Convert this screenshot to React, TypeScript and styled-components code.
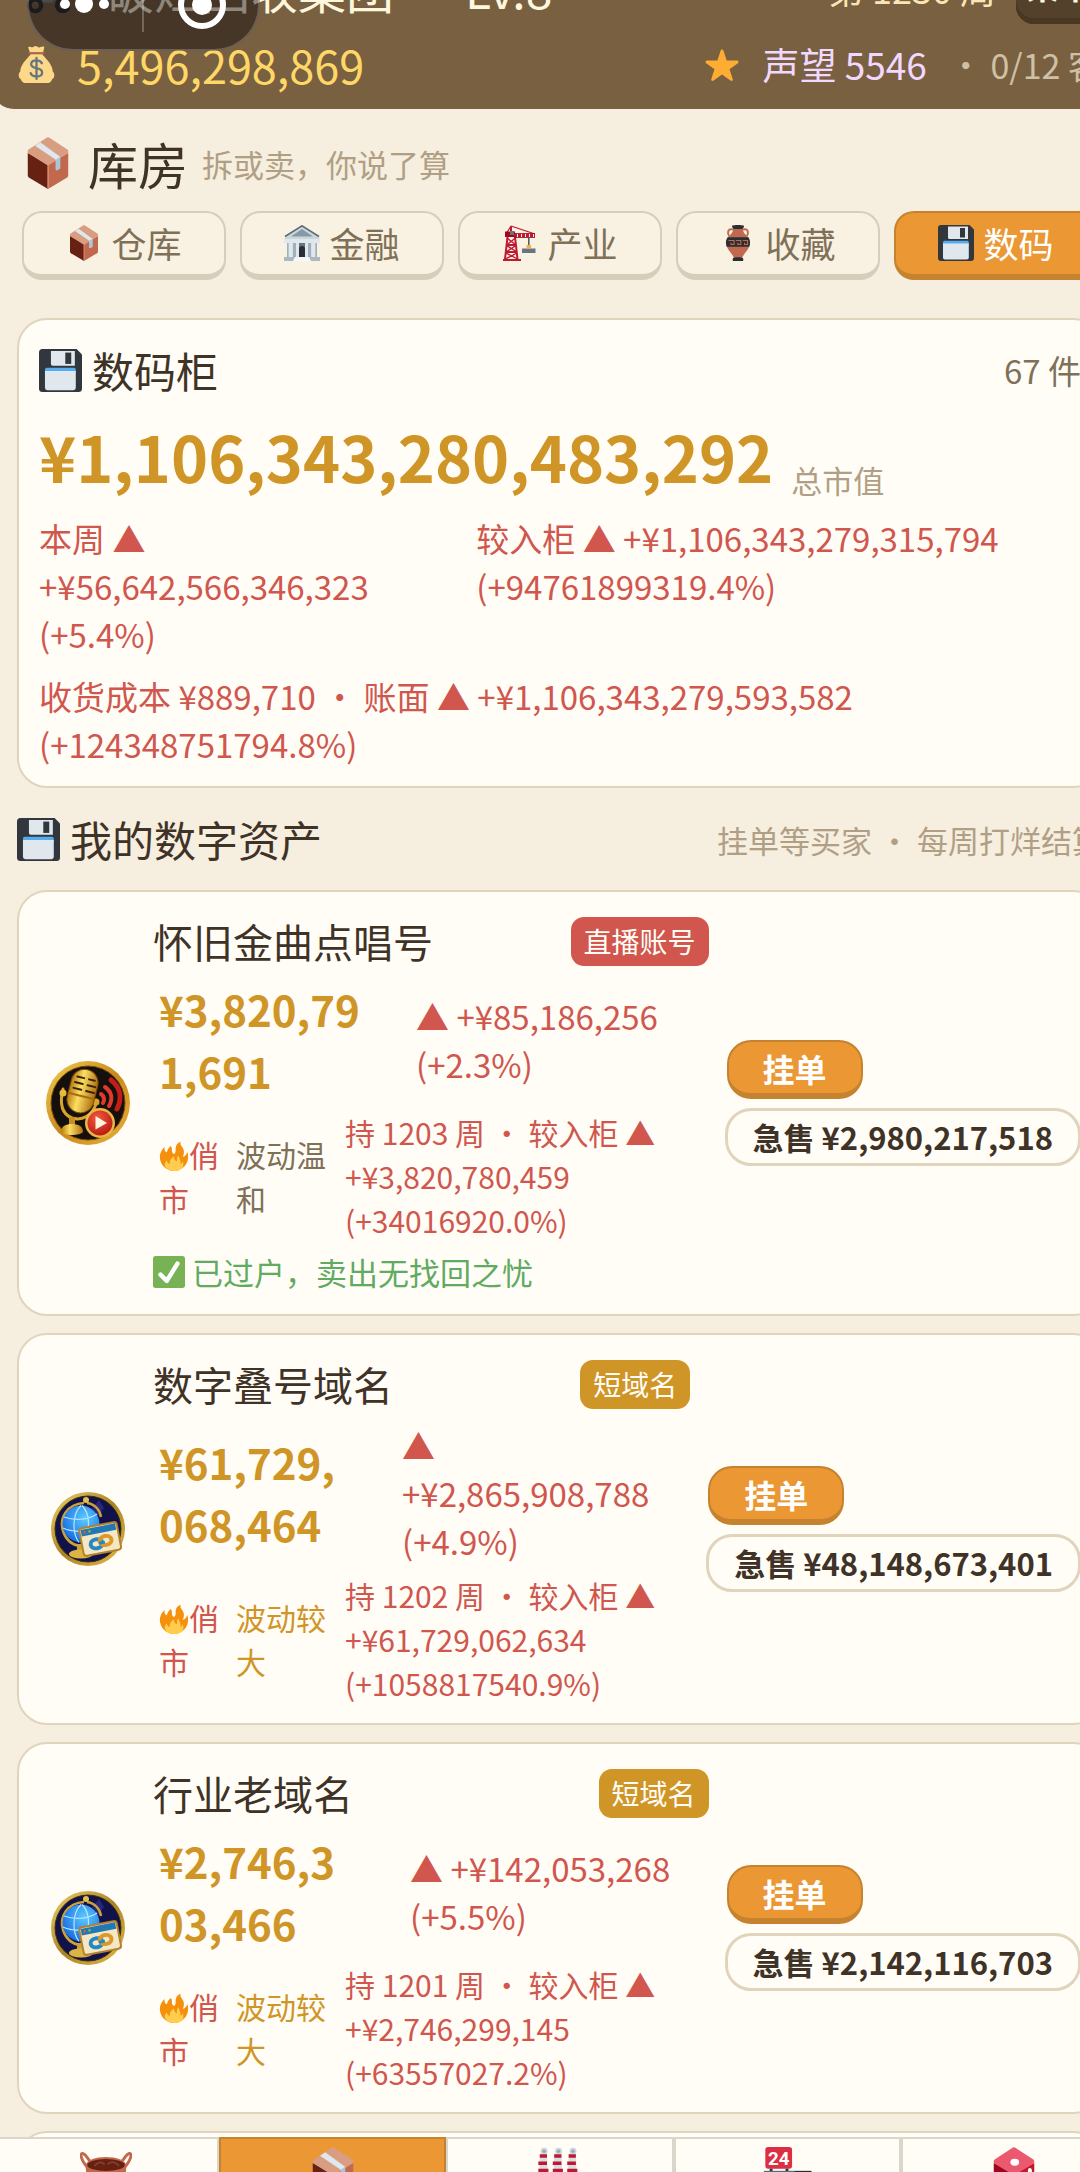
import { useState } from 'react';
import type { ReactNode } from 'react';
import styled, { createGlobalStyle, ThemeProvider } from 'styled-components';

const theme = {
  colors: {
    page: '#f6eedf',
    card: '#fffdf6',
    cardBorder: '#e0d4bd',
    header: '#796041',
    headerDark: '#54412b',
    orange: '#eb9733',
    orangeDark: '#c5832f',
    gold: '#cf9526',
    red: '#d0564e',
    green: '#5fab62',
    text: '#3f3226',
    muted: '#7f7058',
    faint: '#b09f84',
  },
};

type Color = keyof typeof theme.colors;

const GlobalStyle = createGlobalStyle`
  *, *::before, *::after {
    box-sizing: border-box;
  }

  body {
    margin: 0;
    background: ${theme.colors.page};
    font-family: 'Noto Sans CJK SC', 'Noto Sans', sans-serif;
    color: ${theme.colors.text};
  }

  h1, h2, h3, p {
    margin: 0;
    font-weight: 400;
  }

  button {
    font-family: inherit;
    cursor: pointer;
  }
`;

/* ---------- icons ---------- */

const Svg = styled.svg<{ $size: number }>`
  display: block;
  flex: none;
  width: ${({ $size }) => $size}px;
  height: ${({ $size }) => $size}px;
`;

type IconProps = { size: number };

const BoxIcon = ({ size }: IconProps) => (
  <Svg $size={size} viewBox="0 0 36 36" aria-hidden="true">
    <path fill="#662113" d="M4 11v15.500c0 .8.4 1.300 1 1.700L18 36V18.500z" />
    <path fill="#c1694f" d="M32 11v15.500c0 .8-.4 1.300-1 1.700L18 36V18.500z" />
    <path fill="#d99e82" d="M17 .6 4.600 8.600c-.6.4-.8 1.200-.6 2.400l13 8.200c.7.4 1.300.4 2 0l13-8.200c.2-1.200 0-2-.6-2.400L19 .6c-.7-.5-1.300-.5-2 0z" />
    <path fill="#dfe8ee" d="M9 6 23.400 15.800v6.400c0 .9.7 1 1.300.6l1.700-1.100v-8L12.600 3.700z" />
    <path fill="#a9c5d8" d="M23.400 15.800v6.400c0 .9.7 1 1.300.6l1.700-1.100v-8z" />
    <path fill="none" stroke="#ea9b7c" strokeWidth=".8" d="M18 19v16.600" />
  </Svg>
);

const FloppyIcon = ({ size }: IconProps) => (
  <Svg $size={size} viewBox="0 0 36 36" aria-hidden="true">
    <path fill="#31373d" d="M3 0h28.500L36 4.500V33a3 3 0 0 1-3 3H3a3 3 0 0 1-3-3V3a3 3 0 0 1 3-3z" />
    <path fill="#e1e8ed" d="M10 1.600h20V14H11.500A1.500 1.500 0 0 1 10 12.500z" />
    <path fill="#31373d" d="M22 3h5v9.500h-5z" />
    <path fill="#55acee" d="M6.500 15.700h22.800a1.500 1.500 0 0 1 1.500 1.500V20H5v-2.800a1.500 1.500 0 0 1 1.500-1.500z" />
    <path fill="#e1e8ed" d="M5 18.500h25.800v14a2 2 0 0 1-2 2H7a2 2 0 0 1-2-2z" />
  </Svg>
);

const BankIcon = ({ size }: IconProps) => (
  <Svg $size={size} viewBox="0 0 36 36" aria-hidden="true">
    <path fill="#ccd6dd" d="M3 13h30v19H3z" />
    <path fill="#9fb1bd" d="M9 18h3v14H9zM24 18h3v14h-3zM3 18h1.500v14H3zM31.500 18H33v14h-1.500z" />
    <path fill="#66757f" d="M13 18h10v15H13z" />
    <path fill="#292f33" d="M15 24a3 3 0 0 1 6 0v9h-6z" />
    <path fill="#e1e8ed" d="M5 18h3.500v14H5zM12 18h3v14h-3zM21 18h3v14h-3zM27.500 18H31v14h-3.500zM0 13.500h36V18H0z" />
    <path fill="#ccd6dd" d="M18 0 1 11.500V14h34v-2.500z" />
    <path fill="#8899a6" d="M18 4 7 11.500h22z" />
    <path fill="none" stroke="#5c6b75" strokeWidth="1.500" d="M1 11.500 18 .8l17 10.700" />
    <path fill="#aab8c2" d="M0 32h11l-1 4H0zM25 32h11v4H26z" />
    <path fill="#f5f8fa" d="M11 32h14l2 4H9z" />
  </Svg>
);

const CraneIcon = ({ size }: IconProps) => (
  <Svg $size={size} viewBox="0 0 36 36" aria-hidden="true">
    <path fill="none" stroke="#be1931" strokeWidth="2" d="M5.500 12 3 34M13 12l2.500 22M1 35h18M4.500 20h9M4 27h11M9 1.500v8" />
    <path fill="none" stroke="#be1931" strokeWidth="1.400" d="m5 13 9 7M13.500 13 4.500 20M4.500 20.500l10.500 6.500M14 20.500 4 27M4 28l11.500 6M15 28 3.500 34" />
    <path fill="none" stroke="#be1931" strokeWidth="1.200" d="m9 1 24 8M9 1 4 9" />
    <path fill="#a0041e" d="M3 6.500h10V12H3z" />
    <path fill="#66757f" d="M8 6h4v4H8z" />
    <path fill="none" stroke="#be1931" strokeWidth="3.500" strokeDasharray="3 1" d="M12 10.500h21" />
    <path fill="none" stroke="#a0041e" strokeWidth=".8" d="M12 8.500h21M12 12.500h21" />
    <path fill="#4c6272" d="M26 13h1.600v7H26z" />
    <path fill="#ffac33" d="M24.500 20h4.600v3h-4.600z" />
    <path fill="#66757f" d="M20 23.500h13.500V28H20z" />
  </Svg>
);

const AmphoraIcon = ({ size }: IconProps) => (
  <Svg $size={size} viewBox="0 0 36 36" aria-hidden="true">
    <path fill="none" stroke="#c1694f" strokeWidth="2" d="M13 4.500c-5-1.500-6 3-4 6.500M23 4.500c5-1.500 6 3 4 6.500" />
    <path fill="#c1694f" d="M13 3h10c-.5 4 1.500 5.500 4 8 3 3 3.500 8 1.500 12-1.800 3.700-5 6-6.500 10h-8c-1.500-4-4.700-6.300-6.500-10C5.500 19 6 14 9 11c2.500-2.500 4.500-4 4-8z" />
    <path fill="#292f33" d="M12 1c0-1.300 12-1.300 12 0 0 1.200-1 2.700-2 3h-8c-1-.3-2-1.800-2-3zM13 33.200c1-1.300 9-1.300 10 0 .6 1.500.4 2.800-.6 2.800h-8.800c-1 0-1.200-1.300-.6-2.800zM7.700 12.300h20.600c2 2.700 2.200 6.200 1 9.400H6.700c-1.200-3.200-1-6.700 1-9.400z" />
    <path fill="none" stroke="#c1694f" strokeWidth="1.100" d="M8.500 15.500H14v4h-3v-1.800M15.800 15.500h5v4h-3v-1.800M22.800 15.500h4.800v4h-3v-1.800" />
  </Svg>
);

const MoneyBagIcon = ({ size }: IconProps) => (
  <Svg $size={size} viewBox="0 0 36 36" aria-hidden="true">
    <path fill="#fdd888" d="M12.500 8C7 14 2 19.500 2.300 24.500c-2.700 3-1.800 6.500.7 8C3.600 35 5.500 36 8 36h20c2.500 0 4.400-1 5-3.500 2.500-1.500 3.400-5 .7-8C34 19.500 29 14 23.500 8z" />
    <path fill="#fdd888" d="M11.500 6 10 1.800C9.700.8 11 .3 12.500 1c1 .4 1.700.3 2.700-.3C16.500-.1 18-.1 18.900.7c1 .8 2 .8 3 .3 2-1 4-.8 3.600.6L24.500 6z" />
    <path fill="none" stroke="#bf6952" strokeWidth="1.600" strokeLinecap="round" d="M11 6.800h14" />
    <path fill="none" stroke="#67757f" strokeWidth="2.200" strokeLinecap="round" d="M23.200 16.800c-.8-2-2.800-2.800-5.200-2.800-3 0-5.200 1.200-5.200 3.700 0 5.300 10.700 2.500 10.700 8 0 2.600-2.300 3.900-5.500 3.900-2.800 0-5-1-5.700-3.200M18 11.500v20.500" />
  </Svg>
);

const StarIcon = ({ size }: IconProps) => (
  <Svg $size={size} viewBox="0 0 36 36" aria-hidden="true">
    <path
      fill="#ffac33"
      d="M27.300 34.900c-.3 0-.6-.1-.9-.3L18 28.500l-8.400 6.100c-.3.200-.6.300-.9.300-1.100 0-1.700-1-1.400-2l3.200-9.700-8.300-6c-1.200-.8-.7-2.800.9-2.800h10.300l3.200-9.700c.3-1 1.200-1.200 1.400-1.200.3 0 1.200.2 1.500 1.200l3.200 9.700H33c1.600 0 2.100 2 .9 2.800l-8.400 6 3.200 9.700c.3 1-.3 2-1.400 2z"
    />
  </Svg>
);

const FireIcon = ({ size }: IconProps) => (
  <Svg $size={size} viewBox="0 0 36 36" aria-hidden="true">
    <path fill="#f4900c" d="M35 19c0-2.100-.4-4.100-1-5.900-1.300 3.500-3.300 5.600-5.500 5.900 1.600-2.700 1.800-6.200.8-9-.9-2.500-2.500-3.800-3.300-5.500-.5-1.200-.3-2.500.2-3.500-4.200 1-6.500 5-6.200 9.500.1 2-.2 4.200-2 5-1.700-.7-2.700-2.500-2.500-4.500.2-1.800-.2-3.600-1.300-5-2.500 2-4.200 4.300-4.700 7.500C7 13 6 10 7 7.100 3.600 9.500 1 14 1 19c0 9.400 7.600 17 17 17s17-7.600 17-17z" />
    <path fill="#ffcc4d" d="M28.400 23.700c.1 2-1 3.300-2.500 3.700.5-3.700-1.600-6.200-2.600-10.300-1.700 1.600-2.100 4.500-1.600 7.100-2.400-.5-3.800-3-3.700-6-3.500 2-5.500 5-5.200 9.300-1.700-.3-3.100-1.700-3.300-4.300-1.700 1.500-2.700 3.600-2.700 5.700C7.800 33.200 12.400 36 18 36s11.200-2.300 11.200-7.300c0-2-.2-3.800-.8-5z" />
  </Svg>
);

const CheckIcon = ({ size }: IconProps) => (
  <Svg $size={size} viewBox="0 0 36 36" aria-hidden="true">
    <rect width="36" height="36" rx="3" fill="#77b255" />
    <path fill="none" stroke="#fff" strokeWidth="5" strokeLinecap="round" strokeLinejoin="round" d="m8.500 21 7 7L27.500 8.500" />
  </Svg>
);

const PotIcon = ({ size }: IconProps) => (
  <Svg $size={size} viewBox="0 0 36 36" aria-hidden="true">
    <path fill="none" stroke="#c1694f" strokeWidth="2" d="M5 14C0 8 0 4 2 4.500c2.500.5 3 4 5 5M31 14c5-6 5-10 3-9.500-2.500.5-3 4-5 5" />
    <path fill="#c1694f" d="M4 13c0-8 28-8 28 0 0 8-2 21-14 21S4 21 4 13z" />
    <ellipse cx="18" cy="12.500" rx="13" ry="4.200" fill="#662113" />
    <path fill="none" stroke="#8a3d2b" strokeWidth="1.200" d="M10 13c3-3 5-3 7-1M19 12c2-2 5-2 8 1" />
  </Svg>
);

const FactoryIcon = ({ size }: IconProps) => (
  <Svg $size={size} viewBox="0 0 36 36" aria-hidden="true">
    {[3, 13, 23].map((x) => (
      <g key={x}>
        <circle cx={x + 4} cy="3" r="2.400" fill="#ccd6dd" />
        <circle cx={x + 4} cy="3" r="1.200" fill="#99aab5" />
        <path fill="#d8dfe3" d={`M${x + 1} 5h5l1 27h-7z`} />
        <path fill="#be1931" d={`M${x + 1} 5h5v2.500h-5zM${x} 10h6v2.500h-6zM${x} 15h7v2.500h-7z`} />
      </g>
    ))}
  </Svg>
);

const StoreIcon = ({ size }: IconProps) => (
  <Svg $size={size} viewBox="0 0 36 36" aria-hidden="true">
    <rect x="3" width="18.500" height="15" rx="2" fill="#dd2e44" />
    <text x="12.250" y="12.300" fill="#fff" fontSize="13" fontWeight="700" textAnchor="middle" fontFamily="Roboto, sans-serif">24</text>
    <path fill="#292f33" d="M6 15h2v2H6zM17 15h2v2h-2z" />
    <path fill="#4c6f80" d="M2 16.500h21v18H2z" />
    <path fill="#292f33" d="M23 16.500h12v18H23z" />
  </Svg>
);

const DiceIcon = ({ size }: IconProps) => (
  <Svg $size={size} viewBox="0 0 36 36" aria-hidden="true">
    <path fill="#a0041e" d="M4 11v15.500c0 .8.4 1.300 1 1.700L18 36V18.500z" />
    <path fill="#be1931" d="M32 11v15.500c0 .8-.4 1.300-1 1.700L18 36V18.500z" />
    <path fill="#ea596e" d="M17 .6 4.600 8.600c-.6.4-.8 1.200-.6 2.400l13 8.200c.7.4 1.300.4 2 0l13-8.200c.2-1.200 0-2-.6-2.400L19 .6c-.7-.5-1.300-.5-2 0z" />
    <ellipse cx="18.500" cy="10.500" rx="3" ry="2.400" fill="#fff" />
    <ellipse cx="29" cy="16.500" rx="1.400" ry="2" fill="#fff" />
  </Svg>
);

const ScooterIcon = ({ size }: IconProps) => (
  <Svg $size={size} viewBox="0 0 36 36" aria-hidden="true">
    <path fill="#7b8a92" d="M5 26c0-6 5-9 10-8l5 6 5-14h5l-6 18H10z" />
    <circle cx="12" cy="30" r="4" fill="none" stroke="#292f33" strokeWidth="3" />
    <circle cx="31" cy="30" r="4" fill="none" stroke="#292f33" strokeWidth="3" />
  </Svg>
);

const MicMedal = () => (
  <Svg $size={84} viewBox="0 0 84 84" role="img" aria-label="直播账号">
    <defs>
      <linearGradient id="micRing" x1="0" y1="0" x2="1" y2="1">
        <stop offset="0" stopColor="#f3cf55" />
        <stop offset=".5" stopColor="#c8891c" />
        <stop offset="1" stopColor="#e9b23a" />
      </linearGradient>
      <linearGradient id="micGold" x1="0" y1="0" x2="1" y2="0">
        <stop offset="0" stopColor="#b87a13" />
        <stop offset=".4" stopColor="#fbdf62" />
        <stop offset="1" stopColor="#b06f10" />
      </linearGradient>
      <radialGradient id="playRed" cx=".4" cy=".3" r=".8">
        <stop offset="0" stopColor="#f2593d" />
        <stop offset="1" stopColor="#b3140f" />
      </radialGradient>
    </defs>
    <circle cx="42" cy="42" r="42" fill="url(#micRing)" />
    <circle cx="42" cy="42" r="37" fill="#16100c" stroke="#7d4b0d" />
    <path fill="none" stroke="#c31d1a" strokeWidth="5" strokeLinecap="round" d="M65 19c10 8 11 19 6 29" />
    <path fill="none" stroke="#e13a2c" strokeWidth="4" strokeLinecap="round" d="M59 26c7 5 8 12 4 19M55 33c3 2 4 6 2 9" />
    <path fill="none" stroke="#d9a42c" strokeWidth="3" strokeLinecap="round" d="M17 28c-4 16-1 25 9 29 10 3 20-2 24-14" />
    <circle cx="17" cy="32" r="3.500" fill="#e7b93c" />
    <circle cx="50" cy="41" r="3.500" fill="#d9a42c" />
    <path fill="#c88f20" d="M23 56h6v9h-6z" />
    <path fill="url(#micGold)" d="M15 71c0-6 5-8 11-8s11 2 11 8c-3 4-19 4-22 0z" />
    <g transform="rotate(14 36 30)">
      <rect x="23" y="8" width="27" height="44" rx="13.500" fill="url(#micGold)" stroke="#7a4a08" />
      <path stroke="#3a2205" strokeWidth="2" strokeLinecap="round" d="M28 17h7M40 17h6M27 23h8M40 23h8M27 29h8M40 29h8" />
      <path stroke="#a86b10" strokeWidth="2" d="M23 35h27" />
    </g>
    <circle cx="54" cy="62" r="15" fill="#e9b84a" />
    <circle cx="54" cy="62" r="12.500" fill="url(#playRed)" />
    <path fill="#fff4e0" d="M49.500 55v13.500L61 62z" />
  </Svg>
);

const GlobeMedal = () => (
  <Svg $size={74} viewBox="0 0 74 74" role="img" aria-label="短域名">
    <defs>
      <linearGradient id="globeRing" x1="0" y1="0" x2="1" y2="1">
        <stop offset="0" stopColor="#ecd46c" />
        <stop offset=".5" stopColor="#a98324" />
        <stop offset="1" stopColor="#e3bc4a" />
      </linearGradient>
      <radialGradient id="globeBlue" cx=".6" cy=".35" r=".7">
        <stop offset="0" stopColor="#5ccbff" />
        <stop offset="1" stopColor="#1668e0" />
      </radialGradient>
    </defs>
    <circle cx="37" cy="37" r="37" fill="url(#globeRing)" />
    <circle cx="37" cy="37" r="33" fill="#11124a" stroke="#3d2b0c" />
    <path fill="#2a2679" d="m48 8 5 8-6 8-6-8z" />
    <path fill="none" stroke="#caa23a" strokeWidth="2.500" d="M33 11C16 12 8 26 12 39c3 9 9 14 17 15M36 11c8 1 13 7 14 14" />
    <circle cx="35" cy="8" r="3" fill="#e2bf52" />
    <path fill="#caa23a" d="M26 52h7v7h-7z" />
    <ellipse cx="30" cy="62" rx="12" ry="4.500" fill="#dcb345" />
    <circle cx="30" cy="32" r="18.500" fill="url(#globeBlue)" />
    <path fill="none" stroke="#b9e6ff" strokeWidth="1.200" d="M30 13.500c-9 9-9 28-2 37M31 13.500c9 9 8 26 1 37M13 25c11 4 24 3 33-3M12 36c11 5 26 4 36-2" />
    <g transform="rotate(-11 49 46)">
      <rect x="30" y="33" width="38" height="28" rx="3" fill="#f6e7c4" stroke="#b3822c" strokeWidth="2" />
      <path fill="#2277b5" d="M31.500 34.500h35V41h-35z" />
      <circle cx="35" cy="37.500" r="1.400" fill="#e3552b" />
      <circle cx="40" cy="37.500" r="1.400" fill="#6fbd4a" />
      <ellipse cx="44.500" cy="51" rx="6" ry="4.500" fill="none" stroke="#2388c4" strokeWidth="4" />
      <ellipse cx="54" cy="49.500" rx="6" ry="4.500" fill="none" stroke="#d99a2b" strokeWidth="4" />
      <path stroke="#2388c4" strokeWidth="3" d="M47 51h6" />
    </g>
  </Svg>
);

/* ---------- layout ---------- */

const Shell = styled.div`
  position: relative;
  display: flex;
  flex-direction: column;
  height: 100vh;
  overflow: hidden;
`;

/* the game board is a little wider than the web view that hosts it */
const Page = styled.div`
  flex: 1;
  min-height: 0;
  width: calc(100% + 40px);
  margin-top: -48px;
  overflow: hidden;
`;

const Header = styled.header`
  display: flex;
  flex-direction: column;
  gap: 10px;
  margin: 0 -8px;
  padding: 0 26px 15px;
  border-radius: 0 0 22px 22px;
  background: ${({ theme }) => theme.colors.header};
  white-space: nowrap;
`;

const HeaderRow = styled.div<{ $height: number }>`
  display: flex;
  align-items: center;
  justify-content: space-between;
  height: ${({ $height }) => $height}px;
`;

const HeaderGroup = styled.div<{ $gap: number }>`
  display: flex;
  align-items: center;
  gap: ${({ $gap }) => $gap}px;
`;

const Company = styled.h1`
  font-size: 48px;
  color: #fff6de;
`;

const Level = styled.span`
  margin-left: 35px;
  font-size: 48px;
  color: #fff6de;
`;

const Week = styled.span`
  font-size: 36px;
  color: #fce5b5;
`;

const MenuButton = styled.button`
  height: 72px;
  padding: 0 10px 6px;
  border: 0;
  border-radius: 18px;
  background: ${({ theme }) => theme.colors.headerDark};
  box-shadow: inset 0 -6px 0 #493722;
  font-size: 33px;
  font-weight: 700;
  color: #fff6de;
`;

const Money = styled.span`
  font-size: 45px;
  color: #ffd766;
`;

const Fame = styled.span`
  font-size: 37px;
  color: #f0d8ff;
`;

const Seats = styled.span`
  font-size: 34px;
  color: #cfc0a6;
`;

const Capsule = styled.div`
  position: absolute;
  top: -42px;
  left: 27px;
  width: 233px;
  height: 93px;
  border: 2px solid rgba(255, 255, 255, 0.2);
  border-radius: 46px;
  background: rgba(10, 5, 8, 0.46);
`;

const Main = styled.main`
  padding: 24px 17px 0;
`;

const TitleRow = styled.div`
  display: flex;
  align-items: center;
  gap: 14px;
  height: 60px;
  padding-left: 5px;
`;

const PageTitle = styled.h2`
  font-size: 50px;
  line-height: 60px;
`;

const Hint = styled.span`
  font-size: 31px;
  color: ${({ theme }) => theme.colors.faint};
  white-space: nowrap;
`;

const Tabs = styled.div`
  display: grid;
  grid-template-columns: repeat(5, 1fr);
  gap: 14px;
  margin: 18px 5px 38px;
`;

const Tab = styled.button<{ $active: boolean }>`
  display: flex;
  align-items: center;
  justify-content: center;
  gap: 9px;
  height: 69px;
  padding: 0 0 2px;
  border: 2px solid ${({ $active, theme }) => ($active ? theme.colors.orangeDark : '#d6cdbb')};
  border-bottom-width: 6px;
  border-radius: 20px;
  background: ${({ $active, theme }) => ($active ? theme.colors.orange : '#f9f1e1')};
  font-size: 35px;
  line-height: 48px;
  color: ${({ $active, theme }) => ($active ? '#ffffff' : theme.colors.muted)};
`;

const Card = styled.section`
  padding: 18px 20px;
  border: 2px solid ${({ theme }) => theme.colors.cardBorder};
  border-radius: 30px;
  background: ${({ theme }) => theme.colors.card};
`;

const CardHead = styled.div`
  display: flex;
  align-items: center;
  justify-content: space-between;
  height: 64px;
`;

const SectionHead = styled(CardHead)`
  height: 70px;
  margin: 16px 0;
`;

const Heading = styled.h3`
  display: flex;
  align-items: center;
  gap: 10px;
  font-size: 42px;
  line-height: 60px;
`;

const Count = styled.span`
  font-size: 33px;
  color: ${({ theme }) => theme.colors.muted};
`;

const TotalRow = styled.div`
  display: flex;
  align-items: flex-end;
  gap: 18px;
  margin: 8px 0 12px;
`;

const Total = styled.strong`
  font-size: 63px;
  font-weight: 700;
  line-height: 92px;
  color: ${({ theme }) => theme.colors.gold};
`;

const Gains = styled.div`
  display: grid;
  grid-template-columns: 7fr 10fr;
  gap: 14px;
`;

const Gain = styled.p<{ $wide?: boolean }>`
  grid-column: ${({ $wide }) => ($wide ? '1 / -1' : 'auto')};
  font-size: 33px;
  line-height: 48px;
  color: ${({ theme }) => theme.colors.red};
`;

const Amount = styled.span`
  white-space: nowrap;
`;

const AssetList = styled.div`
  display: flex;
  flex-direction: column;
  gap: 17px;
`;

const AssetCard = styled(Card).attrs({ as: 'article' })`
  display: flex;
  align-items: center;
  gap: 16px;
  min-height: 120px;
`;

const Medal = styled.div`
  display: flex;
  justify-content: center;
  flex: none;
  width: 98px;
`;

const Body = styled.div`
  display: flex;
  flex: 1;
  flex-direction: column;
  gap: 6px;
  min-width: 0;
`;

const NameRow = styled.div`
  display: flex;
  align-items: center;
  justify-content: space-between;
  height: 62px;
`;

const Name = styled.h3`
  font-size: 40px;
  line-height: 60px;
`;

const Kind = styled.span<{ $color: Color }>`
  padding: 0 13px;
  border-radius: 13px;
  background: ${({ $color, theme }) => theme.colors[$color]};
  font-size: 28px;
  line-height: 49px;
  color: #fffdf6;
`;

const PriceRow = styled.div`
  display: flex;
  align-items: center;
  gap: 54px;
  padding: 0 6px 2px;
`;

const Price = styled.strong<{ $width: number }>`
  flex: none;
  width: ${({ $width }) => $width}px;
  font-size: 42px;
  font-weight: 700;
  line-height: 62px;
  color: ${({ theme }) => theme.colors.gold};
  word-break: break-all;
`;

const StateRow = styled.div`
  display: grid;
  grid-template-columns: 62px 94px 1fr;
  align-items: center;
  gap: 15px;
  padding-left: 6px;
  font-size: 30px;
  line-height: 44px;
`;

const State = styled.span<{ $color: Color }>`
  color: ${({ $color, theme }) => theme.colors[$color]};

  svg {
    display: inline-block;
    vertical-align: -4px;
  }
`;

const Safe = styled.p`
  display: flex;
  align-items: center;
  gap: 7px;
  font-size: 31px;
  line-height: 48px;
  color: ${({ theme }) => theme.colors.green};
`;

const Actions = styled.div`
  display: flex;
  flex: none;
  flex-direction: column;
  align-items: flex-start;
  gap: 9px;
`;

const ListButton = styled.button`
  height: 59px;
  margin-left: 2px;
  padding: 0 34px;
  border: 2px solid ${({ theme }) => theme.colors.orangeDark};
  border-bottom-width: 6px;
  border-radius: 24px;
  background: ${({ theme }) => theme.colors.orange};
  font-size: 32px;
  font-weight: 700;
  line-height: 48px;
  color: #ffffff;
`;

const SellButton = styled.button`
  height: 58px;
  padding: 0 25px;
  border: 3px solid ${({ theme }) => theme.colors.cardBorder};
  border-radius: 26px;
  background: ${({ theme }) => theme.colors.card};
  font-size: 31px;
  font-weight: 700;
  line-height: 48px;
  color: ${({ theme }) => theme.colors.text};
  white-space: nowrap;
`;

const Nav = styled.nav`
  display: grid;
  flex: none;
  grid-template-columns: repeat(5, 1fr);
  width: calc(100% + 56px);
  height: 120px;
  margin: 0 -8px -85px;
`;

const NavButton = styled.button<{ $active: boolean }>`
  display: flex;
  justify-content: center;
  padding: 8px 0 0;
  border: 2px solid ${({ $active, theme }) => ($active ? theme.colors.orangeDark : '#d9d6cb')};
  background: ${({ $active, theme }) => ($active ? theme.colors.orange : theme.colors.card)};
`;

/* ---------- data ---------- */

const tabs: { label: string; icon: ReactNode }[] = [
  { label: '仓库', icon: <BoxIcon size={36} /> },
  { label: '金融', icon: <BankIcon size={36} /> },
  { label: '产业', icon: <CraneIcon size={36} /> },
  { label: '收藏', icon: <AmphoraIcon size={36} /> },
  { label: '数码', icon: <FloppyIcon size={36} /> },
];

const navItems: { label: string; icon: ReactNode }[] = [
  { label: '收货', icon: <PotIcon size={52} /> },
  { label: '库房', icon: <BoxIcon size={52} /> },
  { label: '工厂', icon: <FactoryIcon size={52} /> },
  { label: '门店', icon: <StoreIcon size={52} /> },
  { label: '运气', icon: <DiceIcon size={52} /> },
];

type Asset = {
  name: string;
  kind: string;
  kindColor: Color;
  medal: ReactNode;
  price: string;
  priceWidth: number;
  weekGain: string;
  weekRate: string;
  volatility: string;
  volatilityColor: Color;
  weeks: number;
  totalGain: string;
  totalRate: string;
  sell: string;
  transferred?: boolean;
};

const assets: Asset[] = [
  {
    name: '怀旧金曲点唱号',
    kind: '直播账号',
    kindColor: 'red',
    medal: <MicMedal />,
    price: '¥3,820,791,691',
    priceWidth: 203,
    weekGain: '+¥85,186,256',
    weekRate: '(+2.3%)',
    volatility: '波动温和',
    volatilityColor: 'muted',
    weeks: 1203,
    totalGain: '+¥3,820,780,459',
    totalRate: '(+34016920.0%)',
    sell: '¥2,980,217,518',
    transferred: true,
  },
  {
    name: '数字叠号域名',
    kind: '短域名',
    kindColor: 'gold',
    medal: <GlobeMedal />,
    price: '¥61,729,068,464',
    priceWidth: 189,
    weekGain: '+¥2,865,908,788',
    weekRate: '(+4.9%)',
    volatility: '波动较大',
    volatilityColor: 'gold',
    weeks: 1202,
    totalGain: '+¥61,729,062,634',
    totalRate: '(+1058817540.9%)',
    sell: '¥48,148,673,401',
  },
  {
    name: '行业老域名',
    kind: '短域名',
    kindColor: 'gold',
    medal: <GlobeMedal />,
    price: '¥2,746,303,466',
    priceWidth: 197,
    weekGain: '+¥142,053,268',
    weekRate: '(+5.5%)',
    volatility: '波动较大',
    volatilityColor: 'gold',
    weeks: 1201,
    totalGain: '+¥2,746,299,145',
    totalRate: '(+63557027.2%)',
    sell: '¥2,142,116,703',
  },
];

const AssetItem = ({ asset }: { asset: Asset }) => (
  <AssetCard>
    <Medal>{asset.medal}</Medal>
    <Body>
      <NameRow>
        <Name>{asset.name}</Name>
        <Kind $color={asset.kindColor}>{asset.kind}</Kind>
      </NameRow>
      <PriceRow>
        <Price $width={asset.priceWidth}>{asset.price}</Price>
        <Gain>
          ▲ <Amount>{asset.weekGain}</Amount> <Amount>{asset.weekRate}</Amount>
        </Gain>
      </PriceRow>
      <StateRow>
        <State $color="red">
          <FireIcon size={30} />
          俏市
        </State>
        <State $color={asset.volatilityColor}>{asset.volatility}</State>
        <State $color="red">
          持 {asset.weeks} 周 · 较入柜 ▲ <Amount>{asset.totalGain}</Amount> <Amount>{asset.totalRate}</Amount>
        </State>
      </StateRow>
      {asset.transferred && (
        <Safe>
          <CheckIcon size={32} />
          已过户，卖出无找回之忧
        </Safe>
      )}
    </Body>
    <Actions>
      <ListButton type="button">挂单</ListButton>
      <SellButton type="button">急售 {asset.sell}</SellButton>
    </Actions>
  </AssetCard>
);

export default function App() {
  const [tab, setTab] = useState('数码');
  const [section, setSection] = useState('库房');

  return (
    <ThemeProvider theme={theme}>
      <GlobalStyle />
      <Shell lang="zh-CN">
        <Page>
          <Header>
            <HeaderRow $height={72}>
              <HeaderGroup $gap={36}>
                <ScooterIcon size={52} />
                <Company>破烂回收集团</Company>
                <Level>Lv.8</Level>
              </HeaderGroup>
              <HeaderGroup $gap={20}>
                <Week>第 1230 周</Week>
                <MenuButton type="button">菜单</MenuButton>
              </HeaderGroup>
            </HeaderRow>
            <HeaderRow $height={60}>
              <HeaderGroup $gap={22}>
                <MoneyBagIcon size={37} />
                <Money>5,496,298,869</Money>
              </HeaderGroup>
              <HeaderGroup $gap={22}>
                <StarIcon size={36} />
                <Fame>声望 5546</Fame>
                <Seats>· 0/12 客</Seats>
              </HeaderGroup>
            </HeaderRow>
          </Header>

          <Main>
            <TitleRow>
              <BoxIcon size={52} />
              <PageTitle>库房</PageTitle>
              <Hint>拆或卖，你说了算</Hint>
            </TitleRow>
            <Tabs role="tablist">
              {tabs.map(({ label, icon }) => (
                <Tab
                  key={label}
                  type="button"
                  role="tab"
                  aria-selected={tab === label}
                  $active={tab === label}
                  onClick={() => setTab(label)}
                >
                  {icon}
                  {label}
                </Tab>
              ))}
            </Tabs>

            <Card>
              <CardHead>
                <Heading>
                  <FloppyIcon size={43} />
                  数码柜
                </Heading>
                <Count>67 件</Count>
              </CardHead>
              <TotalRow>
                <Total>¥1,106,343,280,483,292</Total>
                <Hint>总市值</Hint>
              </TotalRow>
              <Gains>
                <Gain>
                  本周 ▲ <Amount>+¥56,642,566,346,323</Amount> <Amount>(+5.4%)</Amount>
                </Gain>
                <Gain>
                  较入柜 ▲ <Amount>+¥1,106,343,279,315,794</Amount> <Amount>(+94761899319.4%)</Amount>
                </Gain>
                <Gain $wide>
                  收货成本 ¥889,710 · 账面 ▲ <Amount>+¥1,106,343,279,593,582</Amount>{' '}
                  <Amount>(+124348751794.8%)</Amount>
                </Gain>
              </Gains>
            </Card>

            <SectionHead>
              <Heading>
                <FloppyIcon size={43} />
                我的数字资产
              </Heading>
              <Hint>挂单等买家 · 每周打烊结算</Hint>
            </SectionHead>
            <AssetList>
              {assets.map((asset) => (
                <AssetItem key={asset.name} asset={asset} />
              ))}
              <AssetCard />
            </AssetList>
          </Main>
        </Page>

        <Nav aria-label="主导航">
          {navItems.map(({ label, icon }) => (
            <NavButton
              key={label}
              type="button"
              aria-label={label}
              $active={section === label}
              onClick={() => setSection(label)}
            >
              {icon}
            </NavButton>
          ))}
        </Nav>

        <Capsule>
          <svg width="228" height="88" viewBox="0 0 228 88" aria-hidden="true">
            <circle cx="36" cy="44" r="5" fill="#fff" />
            <circle cx="55" cy="44" r="9" fill="#fff" />
            <circle cx="75" cy="44" r="5" fill="#fff" />
            <path stroke="#fff" strokeOpacity=".25" strokeWidth="2" d="M114 16v56" />
            <circle cx="173" cy="45" r="21" fill="none" stroke="#fff" strokeWidth="6" />
            <circle cx="173" cy="45" r="10" fill="#fff" />
          </svg>
        </Capsule>
      </Shell>
    </ThemeProvider>
  );
}
